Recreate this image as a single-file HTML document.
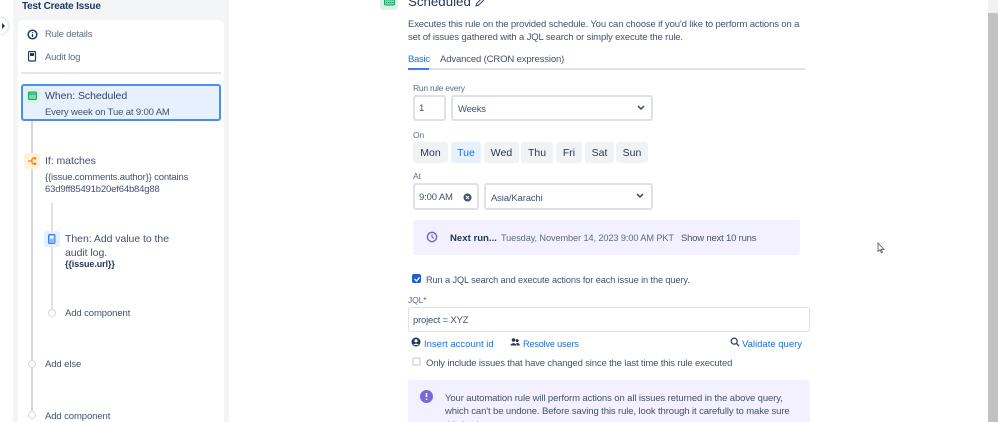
<!DOCTYPE html>
<html><head><meta charset="utf-8">
<style>
html,body{margin:0;padding:0;background:#fff}
#p{position:relative;width:998px;height:422px;overflow:hidden;background:#fff;font-family:"Liberation Sans",sans-serif;font-size:9.5px;color:#42526e}
#p div,#p svg{position:absolute}
.t{white-space:nowrap;line-height:14px;letter-spacing:-.15px}
.box{box-sizing:border-box;background:#fff;border:2px solid #dfe1e6;border-radius:3px}
.day{background:#f1f2f4;border-radius:3px;height:21px;line-height:22px;top:142px;text-align:center;color:#253858;font-size:10.5px}
.b{color:#1d6fe0}
.ln{background:#d5d8de;width:2px}
.c{box-sizing:border-box;width:8px;height:8px;border:1.5px solid #d5d8de;border-radius:50%;background:#fff}
</style></head><body><div id="p">
<!-- sidebar -->
<div style="left:13px;top:0;width:216px;height:422px;background:#f4f5f7"></div>
<div style="left:18px;top:20px;width:206px;height:402px;background:#fff;border-radius:5px 5px 0 0"></div>
<div style="left:0;top:18px;width:8px;height:16px;background:#fff;border-radius:0 8px 8px 0;box-shadow:0 0 3px rgba(9,30,66,.3)"></div>
<svg style="left:1px;top:23px" width="5" height="6"><path d="M1 0l3 3-3 3z" fill="#253858"/></svg>
<div class="t" style="left:22px;top:0;font-size:10px;font-weight:bold;color:#253858;letter-spacing:-.2px">Test Create Issue</div>
<svg style="left:27px;top:29px" width="11" height="11" viewBox="0 0 11 11"><circle cx="5.5" cy="5.5" r="4.3" fill="none" stroke="#253858" stroke-width="1.5"/><path d="M5.5 5v3M5.5 3v1" stroke="#253858" stroke-width="1.3"/></svg>
<div class="t" style="left:45px;top:28px;color:#5e6c84;letter-spacing:-.2px">Rule details</div>
<svg style="left:28px;top:51px" width="9" height="11" viewBox="0 0 9 11"><rect x=".5" y=".5" width="7" height="9.5" rx="1" fill="none" stroke="#253858" stroke-width="1.2"/><rect x="2" y="2" width="4" height="3" fill="#253858"/></svg>
<div class="t" style="left:45px;top:51px;color:#5e6c84;letter-spacing:-.2px">Audit log</div>
<div style="left:21px;top:72px;width:200px;height:2px;background:#e4e6ea"></div>
<div class="ln" style="left:31px;top:120px;height:296px"></div>
<div class="ln" style="left:51px;top:203px;height:106px;background:#dfe1e6"></div>
<div style="left:21px;top:84px;width:200px;height:37px;box-sizing:border-box;background:#e6f0ff;border:2px solid #4c8ef0;border-radius:3px"></div>
<div style="left:25px;top:88px;width:15px;height:15px;background:#d8f5e6;border-radius:2px"></div>
<svg style="left:28px;top:91px" width="9" height="9" viewBox="0 0 9 9"><rect x=".5" y="1" width="8" height="7.5" rx="1" fill="#7fd6ab" stroke="#1f9d6a"/><path d="M.5 3h8" stroke="#1f9d6a"/></svg>
<div class="t" style="left:45px;top:89px;font-size:10.5px;color:#344563;letter-spacing:-.05px">When: Scheduled</div>
<div class="t" style="left:45px;top:106px;color:#42526e">Every week on Tue at 9:00 AM</div>
<div style="left:24px;top:153px;width:16px;height:16px;background:#fff3d6;border-radius:3px"></div>
<svg style="left:27px;top:156px" width="10" height="10" viewBox="0 0 10 10"><path d="M1 5h4M8 2H6L5 3v4l1 1h2" fill="none" stroke="#f07f2e" stroke-width="1.3"/><circle cx="8" cy="2.3" r="1.3" fill="#f07f2e"/><circle cx="8" cy="7.7" r="1.3" fill="#f07f2e"/></svg>
<div class="t" style="left:45px;top:154px;font-size:10.5px;color:#42526e;letter-spacing:-.05px">If: matches</div>
<div class="t" style="left:45px;top:172px;font-size:9.5px;color:#42526e;line-height:12px;letter-spacing:-.17px">{{issue.comments.author}} contains<br>63d9ff85491b20ef64b84g88</div>
<div style="left:44px;top:231px;width:16px;height:16px;background:#e4efff;border-radius:3px"></div>
<svg style="left:48px;top:234px" width="8" height="10" viewBox="0 0 8 10"><rect x=".5" y=".5" width="6.5" height="9" rx="1" fill="#8fb8f5" stroke="#3b82f0"/><rect x="2" y="2" width="3.5" height="2.5" fill="#fff"/></svg>
<div class="t" style="left:65px;top:232px;font-size:10.5px;color:#42526e;line-height:14px;letter-spacing:-.05px">Then: Add value to the<br>audit log.</div>
<div class="t" style="left:65px;top:258px;font-size:9px;font-weight:bold;color:#253858;line-height:12px;letter-spacing:-.1px">{{issue.url}}</div>
<div class="c" style="left:48px;top:309px"></div>
<div class="t" style="left:65px;top:307px;color:#42526e;letter-spacing:-.1px">Add component</div>
<div class="c" style="left:28px;top:360px"></div>
<div class="t" style="left:45px;top:358px;color:#42526e;letter-spacing:-.1px">Add else</div>
<div class="c" style="left:28px;top:411px"></div>
<div class="t" style="left:45px;top:410px;color:#42526e;letter-spacing:-.1px">Add component</div>
<!-- header -->
<div style="left:380px;top:-10px;width:18px;height:20px;background:#d8f5e6;border-radius:3px"></div>
<svg style="left:384px;top:-4px" width="11" height="10" viewBox="0 0 11 10"><rect x=".5" y="0" width="10" height="9" rx="1" fill="#7fd6ab" stroke="#1f9d6a"/><path d="M2 4h7M2 6.5h7" stroke="#1f9d6a" stroke-dasharray="1.2 .8"/></svg>
<div class="t" style="left:408px;top:-6px;font-size:13.3px;color:#253858;line-height:16px;letter-spacing:0">Scheduled</div>
<svg style="left:475px;top:-3px" width="10" height="10" viewBox="0 0 10 10"><path d="M1 9l.6-2.4L7 1.2l1.8 1.8-5.4 5.4z" fill="none" stroke="#344563" stroke-width="1"/></svg>
<div class="t" style="left:408px;top:17.5px;color:#42526e;line-height:13.3px;letter-spacing:-.145px">Executes this rule on the provided schedule. You can choose if you'd like to perform actions on a<br>set of issues gathered with a JQL search or simply execute the rule.</div>
<div class="t" style="left:408px;top:53px;color:#1d6fe0;letter-spacing:-.3px">Basic</div>
<div class="t" style="left:440px;top:53px;color:#42526e;letter-spacing:-.14px">Advanced (CRON expression)</div>
<div style="left:408px;top:68px;width:397px;height:2px;background:#dfe1e6"></div>
<div style="left:408px;top:68px;width:21px;height:2px;background:#3b7cf0"></div>
<!-- form -->
<div class="t" style="left:413px;top:81px;font-size:8.5px;color:#5e6c84;letter-spacing:-.25px">Run rule every</div>
<div class="box" style="left:413px;top:95px;width:33px;height:26px"></div>
<div class="t" style="left:419px;top:102px;color:#42526e">1</div>
<div class="box" style="left:451px;top:95px;width:202px;height:26px"></div>
<div class="t" style="left:458px;top:103px;color:#42526e;letter-spacing:-.2px">Weeks</div>
<svg style="left:637px;top:105px" width="8" height="6" viewBox="0 0 8 6"><path d="M1 1l3 3 3-3" fill="none" stroke="#344563" stroke-width="1.5"/></svg>
<div class="t" style="left:413px;top:128px;font-size:8.5px;color:#5e6c84">On</div>
<div class="day" style="left:413px;width:35px">Mon</div>
<div class="day" style="left:451px;width:30px;background:#e6f0ff;color:#1d6fe0">Tue</div>
<div class="day" style="left:484px;width:35px">Wed</div>
<div class="day" style="left:521px;width:32px">Thu</div>
<div class="day" style="left:556px;width:26px">Fri</div>
<div class="day" style="left:585px;width:29px">Sat</div>
<div class="day" style="left:616px;width:32px">Sun</div>
<div class="t" style="left:413px;top:169px;font-size:8.5px;color:#5e6c84">At</div>
<div class="box" style="left:413px;top:183px;width:66px;height:27px"></div>
<div class="t" style="left:419px;top:191px;color:#42526e">9:00 AM</div>
<svg style="left:463px;top:193px" width="9" height="9" viewBox="0 0 9 9"><circle cx="4.5" cy="4.5" r="4" fill="#42526e"/><path d="M3 3l3 3M6 3l-3 3" stroke="#fff"/></svg>
<div class="box" style="left:484px;top:183px;width:169px;height:27px"></div>
<div class="t" style="left:491px;top:192px;color:#42526e">Asia/Karachi</div>
<svg style="left:636px;top:193px" width="8" height="6" viewBox="0 0 8 6"><path d="M1 1l3 3 3-3" fill="none" stroke="#344563" stroke-width="1.5"/></svg>
<!-- next run -->
<div style="left:413px;top:220px;width:387px;height:35px;background:#f3f0ff;border-radius:3px"></div>
<svg style="left:426px;top:231px" width="12" height="12" viewBox="0 0 12 12"><circle cx="6" cy="6" r="4.6" fill="none" stroke="#7a68d8" stroke-width="1.5"/><path d="M6 3.4V6l1.8 1.4" fill="none" stroke="#7a68d8" stroke-width="1.2"/></svg>
<div class="t" style="left:450px;top:232px;font-weight:bold;color:#253858;font-size:9.6px;letter-spacing:0">Next run...</div>
<div class="t" style="left:501px;top:231px;color:#5e6c84;font-size:9.2px;letter-spacing:-.1px">Tuesday, November 14, 2023 9:00 AM PKT</div>
<div class="t" style="left:681px;top:232px;color:#42526e;letter-spacing:-.2px">Show next 10 runs</div>
<!-- jql -->
<div style="left:412px;top:274px;width:9px;height:9px;background:#1d5fd0;border-radius:2px"></div>
<svg style="left:413px;top:275px" width="8" height="8" viewBox="0 0 8 8"><path d="M1.5 4l2 2 3-3.6" fill="none" stroke="#fff" stroke-width="1.3"/></svg>
<div class="t" style="left:426px;top:273px;color:#42526e;font-size:9.2px;letter-spacing:-.1px">Run a JQL search and execute actions for each issue in the query.</div>
<div class="t" style="left:408px;top:293px;font-size:8.5px;color:#5e6c84;letter-spacing:-.1px">JQL<span style="color:#de350b">*</span></div>
<div class="box" style="left:408px;top:307px;width:402px;height:25px;border-width:1.5px"></div>
<div class="t" style="left:413px;top:314px;color:#42526e;letter-spacing:-.2px">project = XYZ</div>
<svg style="left:411px;top:337px" width="10" height="10" viewBox="0 0 10 10"><circle cx="5" cy="5" r="4.5" fill="#253858"/><circle cx="5" cy="3.8" r="1.6" fill="#fff"/><path d="M2.4 8c.6-1.8 4.6-1.8 5.2 0" fill="#fff"/></svg>
<div class="t b" style="left:424px;top:338px;letter-spacing:0">Insert account id</div>
<svg style="left:510px;top:337px" width="10" height="10" viewBox="0 0 10 10"><circle cx="3.5" cy="3" r="1.8" fill="#253858"/><circle cx="7.2" cy="3.6" r="1.5" fill="#253858"/><path d="M.5 8.5c0-3 6-3 6 0zM7 8.5h2.8c0-2.4-2.4-2.8-3.6-2.2z" fill="#253858"/></svg>
<div class="t b" style="left:523px;top:337px;font-size:9.2px;letter-spacing:-.2px">Resolve users</div>
<svg style="left:730px;top:337px" width="10" height="10" viewBox="0 0 10 10"><circle cx="4.2" cy="4.2" r="3" fill="none" stroke="#344563" stroke-width="1.3"/><path d="M6.4 6.4L9 9" stroke="#344563" stroke-width="1.3"/></svg>
<div class="t b" style="left:742px;top:338px;letter-spacing:0">Validate query</div>
<div style="left:412px;top:357px;width:9px;height:9px;box-sizing:border-box;border:2px solid #dfe1e6;border-radius:2px"></div>
<div class="t" style="left:426px;top:357px;color:#42526e;letter-spacing:-.16px">Only include issues that have changed since the last time this rule executed</div>
<!-- warning -->
<div style="left:408px;top:380px;width:402px;height:42px;background:#f3f0ff;border-radius:3px 3px 0 0"></div>
<svg style="left:420px;top:390px" width="13" height="13" viewBox="0 0 13 13"><circle cx="6.5" cy="6.5" r="6.5" fill="#7a68d8"/><path d="M6.5 3v4M6.5 8.6v1.4" stroke="#fff" stroke-width="1.5"/></svg>
<div class="t" style="left:445px;top:392px;color:#42526e;line-height:13.3px;letter-spacing:-.11px">Your automation rule will perform actions on all issues returned in the above query,<br>which can't be undone. Before saving this rule, look through it carefully to make sure<br>this is okay.</div>
<!-- cursor -->
<svg style="left:877px;top:242px" width="8" height="12" viewBox="0 0 8 12"><path d="M1 1v8.5l2-1.8 1.3 3 1.2-.6-1.3-2.8H7z" fill="#fff" stroke="#555" stroke-width=".8"/></svg>
<!-- scrollbar -->
<div style="left:988px;top:0;width:10px;height:422px;background:#f1f1f1"></div>
<div style="left:988px;top:13px;width:10px;height:409px;background:#c1c1c1"></div>
</div></body></html>
